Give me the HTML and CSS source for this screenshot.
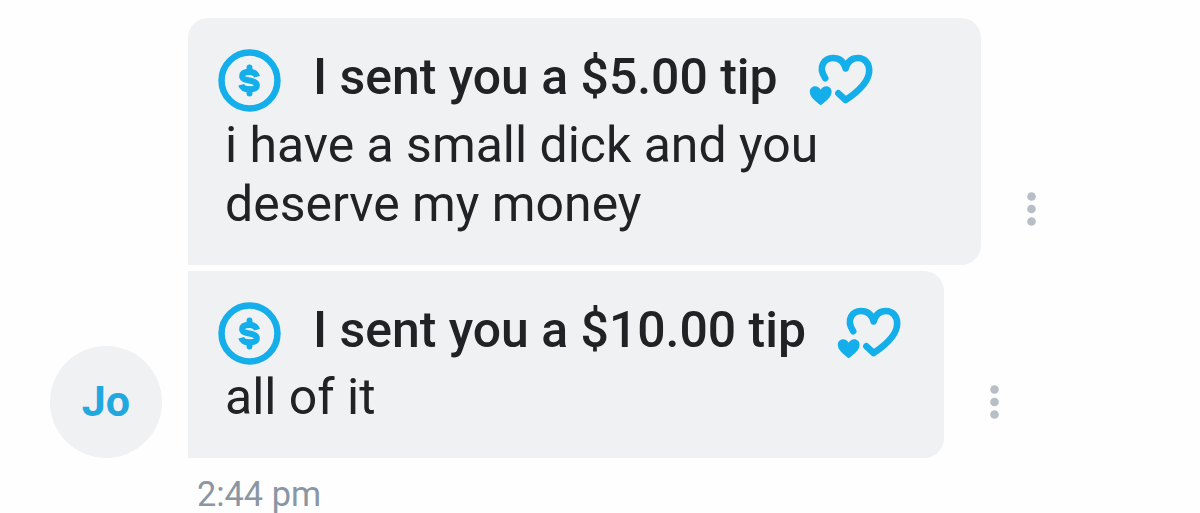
FILE: index.html
```html
<!DOCTYPE html>
<html lang="en">
<head>
<meta charset="utf-8">
<title>Messages</title>
<link rel="stylesheet" href="styles.css">
</head>
<body>
<svg class="symbols" aria-hidden="true">
  <symbol id="coin" viewBox="0 0 64 64">
    <circle cx="32" cy="32" r="28.4" fill="none" stroke="currentColor" stroke-width="6.6"/>
    <path d="M39.600 28.200C38.600 24.200 36 23.200 32 23.200C27.500 23.200 24.600 24.700 24.600 27.600C24.600 30.600 28.500 31.300 32 32C36 32.800 39.400 33.700 39.400 36.900C39.400 39.900 36.500 41 32 41C27.500 41 24.500 39.800 23.600 36.400" fill="none" stroke="currentColor" stroke-width="6.200"/>
    <path d="M32 18.800V23M32 41V45.200" fill="none" stroke="currentColor" stroke-width="6" stroke-linecap="round"/>
  </symbol>
  <symbol id="hearts" viewBox="0 0 64 52">
    <path d="M16.200 24.200C8.500 12.500 15.500 4 24 4C30 4 34.800 7.600 36.600 14.500C38.600 7.600 43.200 4 49 4C55.500 4 60.200 9 60.200 16.500C60.200 26 51 36.500 36.600 46L29.400 39.300" fill="none" stroke="currentColor" stroke-width="6.600" stroke-linecap="round" stroke-linejoin="round"/>
    <path d="M11.700 51.200C6 47 .8 42.800 .8 37.700C.8 34.500 3.200 32.200 6 32.200C8.500 32.200 10.500 33.500 11.700 35.700C12.900 33.500 14.900 32.200 17.400 32.200C20.200 32.200 22.600 34.500 22.600 37.700C22.600 42.800 17.400 47 11.700 51.200Z" fill="currentColor"/>
  </symbol>
  <symbol id="dots" viewBox="0 0 9 34">
    <g fill="currentColor"><circle cx="4.500" cy="4.500" r="4.300"/><circle cx="4.500" cy="17" r="4.300"/><circle cx="4.500" cy="29.500" r="4.300"/></g>
  </symbol>
</svg>
<main class="thread">
  <div class="avatar">Jo</div>
  <div class="messages">
    <div class="message">
      <div class="bubble bubble-first">
        <div class="tip">
          <svg class="coin"><use href="#coin"/></svg>
          <span class="tip-label">I sent you a $5.00 tip</span>
          <svg class="hearts"><use href="#hearts"/></svg>
        </div>
        <p class="body">i have a small dick and you<br>deserve my money</p>
      </div>
      <svg class="more"><use href="#dots"/></svg>
    </div>
    <div class="message">
      <div class="bubble bubble-last">
        <div class="tip">
          <svg class="coin"><use href="#coin"/></svg>
          <span class="tip-label tip-label-wide">I sent you a $10.00 tip</span>
          <svg class="hearts"><use href="#hearts"/></svg>
        </div>
        <p class="body">all of it</p>
      </div>
      <svg class="more"><use href="#dots"/></svg>
    </div>
    <div class="time">2:44 pm</div>
  </div>
</main>
</body>
</html>
```
FILE: styles.css
```css
* { box-sizing: border-box; }
body {
  margin: 0;
  height: 513px;
  overflow: hidden;
  background: #fefefe;
  font-family: Roboto, sans-serif;
  color: #212226;
}
.symbols { display: none; }
.thread {
  display: flex;
  align-items: flex-start;
  gap: 26px;
  padding: 18px 0 0 50px;
}
.avatar {
  flex: none;
  width: 112px;
  height: 112px;
  margin-top: 328px;
  border-radius: 50%;
  background: #f0f1f3;
  color: #20a8df;
  font-size: 43px;
  font-weight: 700;
  line-height: 111px;
  text-align: center;
}
.messages { display: flex; flex-direction: column; gap: 6px; }
.message { display: flex; align-items: flex-end; }
.bubble {
  padding: 31px 30px 30px 30.5px;
  background: #f0f1f3;
}
.bubble-first { width: 793px; height: 247px; border-radius: 20px 20px 20px 0; }
.bubble-last { width: 756px; height: 187px; border-radius: 0 20px 20px 0; }
.bubble-last .tip { height: 66px; }
.tip { display: flex; height: 67px; color: #14aeea; }
.coin { flex: none; width: 63px; height: 63px; margin-left: -0.5px; }
.tip-label {
  flex: none;
  width: 527.5px;
  margin-top: -2px;
  padding-left: 32px;
  color: #212226;
  font-size: 49.9px;
  font-weight: 500;
  line-height: 60px;
  white-space: nowrap;
}
.tip-label-wide { width: 555.5px; }
.hearts { flex: none; width: 64px; height: 52px; margin: 5px 0 0; }
.body {
  margin: 0;
  padding-left: 6.5px;
  font-size: 49.95px;
  line-height: 59px;
  white-space: nowrap;
}
.more {
  flex: none;
  width: 9px;
  height: 34px;
  margin: 0 0 39.5px 45.5px;
  color: #b7bec5;
}
.time {
  padding-left: 9px;
  margin-top: 11px;
  color: #8a96a3;
  font-size: 34.3px;
  line-height: 39px;
}
```
